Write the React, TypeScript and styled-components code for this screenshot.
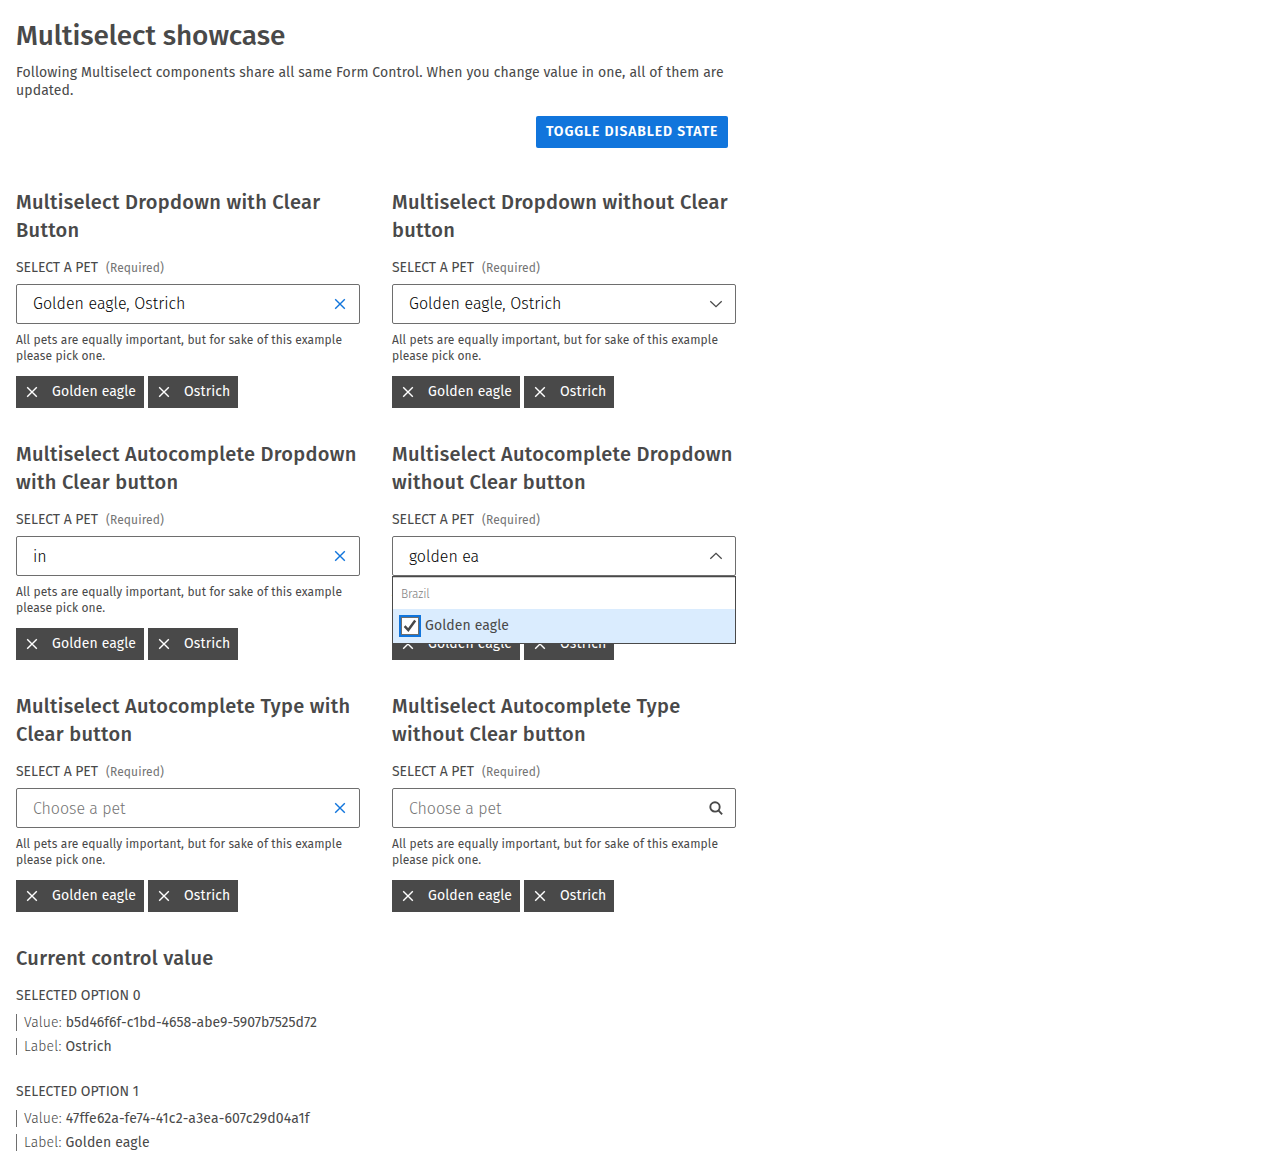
import React from "react";
import styled, { createGlobalStyle } from "styled-components";

const GlobalStyle = createGlobalStyle`
  *, *::before, *::after { box-sizing: border-box; }
  body {
    margin: 0;
    background: #fff;
    color: #494949;
    font-family: "Fira Sans", "Noto Sans", sans-serif;
    font-size: 14px;
    line-height: 18px;
    letter-spacing: 0.1px;
  }
  h1, h2, h3, p, ul, dl, dd { margin: 0; padding: 0; }
`;

const Page = styled.main`
  width: 752px;
  padding: 16px 16px 21px;
`;

const Title = styled.h1`
  font-size: 28px;
  font-weight: 500;
  line-height: 40px;
  letter-spacing: -0.09px;
`;

const Intro = styled.p`
  margin-top: 8px;
`;

const Actions = styled.div`
  display: flex;
  justify-content: flex-end;
  padding: 16px 8px 40px 0;
`;

const PrimaryButton = styled.button`
  width: 192px;
  height: 32px;
  padding: 0 0 0 10px;
  border: 0;
  border-radius: 2px;
  background: #1175dc;
  color: #fff;
  font: 600 14px/30px "Fira Sans", "Noto Sans", sans-serif;
  letter-spacing: 0.86px;
  text-align: left;
  text-transform: uppercase;
`;

const Grid = styled.div`
  display: grid;
  grid-template-columns: repeat(2, 344px);
  gap: 32px;
`;

const Cell = styled.section`
  display: flex;
  flex-direction: column;
`;

const SectionTitle = styled.h2`
  font-size: 20px;
  font-weight: 500;
  line-height: 28px;
  letter-spacing: 0.29px;
`;

const FieldLabel = styled.label`
  display: flex;
  align-items: baseline;
  gap: 8px;
  margin: 15px 0 7px;
  text-transform: uppercase;
  letter-spacing: -0.06px;
`;

const Required = styled.span`
  color: #747474;
  font-size: 12px;
  letter-spacing: 0.12px;
  text-transform: none;
`;

const Control = styled.div`
  position: relative;
  display: flex;
  align-items: center;
  justify-content: space-between;
  height: 40px;
  padding: 0 11px 0 16px;
  border: 1px solid #6e6e6e;
  border-radius: 2px;
`;

const Summary = styled.span`
  color: #000;
  font-size: 16px;
  font-weight: 300;
  line-height: 20px;
  letter-spacing: 0.03px;
`;

const TextInput = styled.input`
  flex: 1;
  min-width: 0;
  padding: 2px 0 0;
  border: 0;
  outline: 0;
  background: none;
  color: #000;
  font: 300 16px/20px "Fira Sans", "Noto Sans", sans-serif;
  letter-spacing: 0;
  &::placeholder { color: #747474; opacity: 1; letter-spacing: -0.06px; }
`;

const Icon = styled.svg<{ $color?: string }>`
  display: block;
  flex: none;
  width: 16px;
  height: 16px;
  fill: none;
  stroke: ${(p) => p.$color ?? "#494949"};
`;

const Hint = styled.p`
  margin-top: 8px;
  font-size: 12px;
  line-height: 16px;
  letter-spacing: 0.1px;
`;

const Chips = styled.div`
  display: flex;
  gap: 4px;
  margin-top: 12px;
`;

const Chip = styled.span`
  display: flex;
  align-items: center;
  gap: 12px;
  height: 32px;
  padding: 0 8px;
  background: #494949;
  color: #fff;
`;

const ChipText = styled.span`
  padding-bottom: 1px;
`;

const Panel = styled.div`
  position: absolute;
  z-index: 1;
  top: 39px;
  left: -1px;
  width: 344px;
  border: 1px solid #494949;
  background: #fff;
`;

const GroupName = styled.div`
  height: 32px;
  padding: 7px 8px 0;
  border-top: 1px solid #d0d0d0;
  color: #808080;
  font-size: 12px;
  font-weight: 300;
  line-height: 18px;
  letter-spacing: -0.15px;
`;

const Option = styled.div`
  display: flex;
  align-items: center;
  gap: 6px;
  height: 34px;
  padding: 0 8px;
  background: #daecfe;
`;

const Checkbox = styled.span`
  display: grid;
  place-items: center;
  width: 18px;
  height: 18px;
  border: 1px solid #6e6e6e;
  outline: 2px solid #1175dc;
  background: #fff;
`;

const Values = styled.section`
  margin-top: 32px;
`;

const OptionBlock = styled.div`
  & + & { margin-top: 13px; }
`;

const OptionTitle = styled.h3`
  padding-top: 15px;
  margin-bottom: 9px;
  font-size: 14px;
  font-weight: 400;
  line-height: 18px;
  letter-spacing: 0.03px;
  text-transform: uppercase;
`;

const Entry = styled.div`
  display: flex;
  gap: 4px;
  height: 17px;
  padding-left: 7px;
  border-left: 1px solid #6e6e6e;
  line-height: 17px;
  & + & { margin-top: 7px; }
`;

const EntryName = styled.span`
  font-weight: 300;
  letter-spacing: 0.14px;
`;

const EntryText = styled.span<{ $tracking?: number }>`
  letter-spacing: ${(p) => p.$tracking ?? 0.1}px;
`;

const Cross = ({ color }: { color: string }) => (
  <Icon viewBox="0 0 16 16" $color={color} strokeWidth="1.4">
    <path d="M3.2 3.2l9.6 9.6M12.8 3.2l-9.6 9.6" />
  </Icon>
);

const Chevron = ({ up }: { up?: boolean }) => (
  <Icon viewBox="0 0 16 16" strokeWidth="1.3">
    <path d={up ? "M2.3 10.8L8 5.4l5.7 5.4" : "M2.3 5.2L8 10.6l5.7-5.4"} />
  </Icon>
);

const Magnifier = () => (
  <Icon viewBox="0 0 16 16" strokeWidth="1.9">
    <circle cx="7" cy="6.9" r="4.7" />
    <path d="M10.2 10.2l3.9 4.2" />
  </Icon>
);

type FieldIcon = "clear" | "down" | "up" | "search";

interface Field {
  title: string;
  icon: FieldIcon;
  summary?: string;
  text?: string;
  open?: boolean;
}

const pets = ["Golden eagle", "Ostrich"];

const fields: Field[] = [
  { title: "Multiselect Dropdown with Clear Button", icon: "clear", summary: pets.join(", ") },
  { title: "Multiselect Dropdown without Clear button", icon: "down", summary: pets.join(", ") },
  { title: "Multiselect Autocomplete Dropdown with Clear button", icon: "clear", text: "in" },
  { title: "Multiselect Autocomplete Dropdown without Clear button", icon: "up", text: "golden ea", open: true },
  { title: "Multiselect Autocomplete Type with Clear button", icon: "clear", text: "" },
  { title: "Multiselect Autocomplete Type without Clear button", icon: "search", text: "" },
];

const selected = [
  { value: "b5d46f6f-c1bd-4658-abe9-5907b7525d72", label: "Ostrich", tracking: 0.02 },
  { value: "47ffe62a-fe74-41c2-a3ea-607c29d04a1f", label: "Golden eagle", tracking: 0.18 },
];

const icons: Record<FieldIcon, React.ReactNode> = {
  clear: <Cross color="#1175dc" />,
  down: <Chevron />,
  up: <Chevron up />,
  search: <Magnifier />,
};

const OptionsPanel = () => (
  <Panel>
    <GroupName>Brazil</GroupName>
    <Option>
      <Checkbox>
        <Icon viewBox="0 0 16 16" strokeWidth="2.5">
          <path d="M2.6 8.1l3.7 3.9L13.2 2.6" />
        </Icon>
      </Checkbox>
      <span>Golden eagle</span>
    </Option>
  </Panel>
);

const Multiselect = ({ title, icon, summary, text, open }: Field) => (
  <Cell>
    <SectionTitle>{title}</SectionTitle>
    <FieldLabel>
      Select a pet <Required>(Required)</Required>
    </FieldLabel>
    <Control>
      {summary ? <Summary>{summary}</Summary> : <TextInput defaultValue={text} placeholder="Choose a pet" />}
      {icons[icon]}
      {open && <OptionsPanel />}
    </Control>
    <Hint>All pets are equally important, but for sake of this example please pick one.</Hint>
    <Chips>
      {pets.map((pet) => (
        <Chip key={pet}>
          <Cross color="#fff" />
          <ChipText>{pet}</ChipText>
        </Chip>
      ))}
    </Chips>
  </Cell>
);

export default function App() {
  return (
    <Page>
      <GlobalStyle />
      <Title>Multiselect showcase</Title>
      <Intro>
        Following Multiselect components share all same Form Control. When you change value in one, all of them are
        updated.
      </Intro>
      <Actions>
        <PrimaryButton>Toggle disabled state</PrimaryButton>
      </Actions>
      <Grid>
        {fields.map((field) => (
          <Multiselect key={field.title} {...field} />
        ))}
      </Grid>
      <Values>
        <SectionTitle>Current control value</SectionTitle>
        {selected.map((option, index) => (
          <OptionBlock key={option.value}>
            <OptionTitle>Selected option {index}</OptionTitle>
            <Entry>
              <EntryName>Value:</EntryName>
              <EntryText $tracking={option.tracking}>{option.value}</EntryText>
            </Entry>
            <Entry>
              <EntryName>Label:</EntryName>
              <EntryText>{option.label}</EntryText>
            </Entry>
          </OptionBlock>
        ))}
      </Values>
    </Page>
  );
}
